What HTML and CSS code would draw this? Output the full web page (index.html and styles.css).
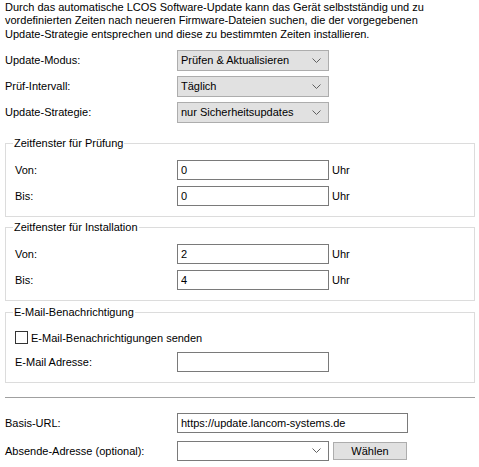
FILE: index.html
```html
<!DOCTYPE html>
<html lang="de">
<head>
  <meta charset="UTF-8">
  <title>LCOS Software-Update</title>
  <link rel="stylesheet" href="styles.css">
</head>
<body>

  <p class="intro">Durch das automatische LCOS Software-Update kann das Gerät selbstständig und zu vordefinierten Zeiten nach neueren Firmware-Dateien suchen, die der vorgegebenen Update-Strategie entsprechen und diese zu bestimmten Zeiten installieren.</p>

  <div class="rows top">
    <div class="row">
      <span class="label">Update-Modus:</span>
      <div class="combo">
        <span>Prüfen &amp; Aktualisieren</span>
        <svg class="chev" width="9" height="5" viewBox="0 0 9 5"><path d="M0.5 0.5 L4.5 4.5 L8.5 0.5" fill="none" stroke="#606060" stroke-width="1"/></svg>
      </div>
    </div>
    <div class="row">
      <span class="label">Prüf-Intervall:</span>
      <div class="combo">
        <span>Täglich</span>
        <svg class="chev" width="9" height="5" viewBox="0 0 9 5"><path d="M0.5 0.5 L4.5 4.5 L8.5 0.5" fill="none" stroke="#606060" stroke-width="1"/></svg>
      </div>
    </div>
    <div class="row">
      <span class="label">Update-Strategie:</span>
      <div class="combo">
        <span>nur Sicherheitsupdates</span>
        <svg class="chev" width="9" height="5" viewBox="0 0 9 5"><path d="M0.5 0.5 L4.5 4.5 L8.5 0.5" fill="none" stroke="#606060" stroke-width="1"/></svg>
      </div>
    </div>
  </div>

  <fieldset class="group first">
    <legend>Zeitfenster für Prüfung</legend>
    <div class="rows">
      <div class="row">
        <span class="label">Von:</span>
        <input class="text" type="text" value="0">
        <span class="unit">Uhr</span>
      </div>
      <div class="row">
        <span class="label">Bis:</span>
        <input class="text" type="text" value="0">
        <span class="unit">Uhr</span>
      </div>
    </div>
  </fieldset>

  <fieldset class="group">
    <legend>Zeitfenster für Installation</legend>
    <div class="rows">
      <div class="row">
        <span class="label">Von:</span>
        <input class="text" type="text" value="2">
        <span class="unit">Uhr</span>
      </div>
      <div class="row">
        <span class="label">Bis:</span>
        <input class="text" type="text" value="4">
        <span class="unit">Uhr</span>
      </div>
    </div>
  </fieldset>

  <fieldset class="group last">
    <legend>E-Mail-Benachrichtigung</legend>
    <div class="rows">
      <label class="check">
        <span class="box"></span>
        E-Mail-Benachrichtigungen senden
      </label>
      <div class="row">
        <span class="label">E-Mail Adresse:</span>
        <input class="text" type="text" value="">
      </div>
    </div>
  </fieldset>

  <hr class="sep">

  <div class="rows bottom">
    <div class="row">
      <span class="label">Basis-URL:</span>
      <input class="text wide" type="text" value="https://update.lancom-systems.de">
    </div>
    <div class="row">
      <span class="label">Absende-Adresse (optional):</span>
      <div class="combo white">
        <span></span>
        <svg class="chev" width="9" height="5" viewBox="0 0 9 5"><path d="M0.5 0.5 L4.5 4.5 L8.5 0.5" fill="none" stroke="#606060" stroke-width="1"/></svg>
      </div>
      <button class="btn" type="button">Wählen</button>
    </div>
  </div>

</body>
</html>
```

FILE: styles.css
```css
body {
  margin: 0;
  padding: 0 5px 0 5px;
  font-family: "Liberation Sans", Arial, sans-serif;
  font-size: 11px;
  color: #000;
  background: #fff;
}
.intro {
  margin: 1px 0 0 0;
  max-width: 420px;
  line-height: 13.3px;
}
.rows {
  display: flex;
  flex-direction: column;
  gap: 6px;
}
.rows.top {
  gap: 5px;
  margin-top: 9px;
}
.rows.bottom {
  gap: 8px;
}
.row {
  display: flex;
  align-items: center;
}
.label {
  width: 172px;
  flex: none;
}
.group .label {
  width: 162px;
}
.combo {
  width: 152px;
  height: 21px;
  box-sizing: border-box;
  background: #e1e1e1;
  border: 1px solid #adadad;
  display: flex;
  align-items: center;
  justify-content: space-between;
  padding: 0 7px 0 3px;
}
.combo.white {
  background: #fff;
  border-color: #7a7a7a;
  height: 20px;
}
.text {
  width: 152px;
  height: 20px;
  box-sizing: border-box;
  border: 1px solid #7a7a7a;
  padding: 0 3px;
  margin: 0;
  font-family: inherit;
  font-size: 11px;
  color: #000;
  background: #fff;
  outline: none;
}
.text.wide {
  width: 231px;
}
.unit {
  margin-left: 3px;
}
.group {
  margin: 4px 0 0 0;
  padding: 10px 9px 10px 9px;
  border: 1px solid #dcdcdc;
  width: 470px;
  box-sizing: border-box;
}
.group.first {
  margin-top: 14px;
}
.group.last {
  margin-top: 5px;
}
.group legend {
  padding: 0 1px;
  margin-left: -2px;
  line-height: 13px;
}
.check {
  display: flex;
  align-items: center;
  height: 16px;
  gap: 3px;
  margin-top: 1px;
}
.box {
  width: 13px;
  height: 13px;
  box-sizing: border-box;
  border: 1px solid #333;
  background: #fff;
}
.sep {
  margin: 14px 0 15px 0;
  border: 0;
  border-top: 1px solid #a0a0a0;
  width: 470px;
}
.btn {
  margin-left: 4px;
  width: 74px;
  height: 18px;
  box-sizing: border-box;
  background: #e1e1e1;
  border: 1px solid #adadad;
  font-family: inherit;
  font-size: 11px;
  color: #000;
  padding: 0;
}
```
